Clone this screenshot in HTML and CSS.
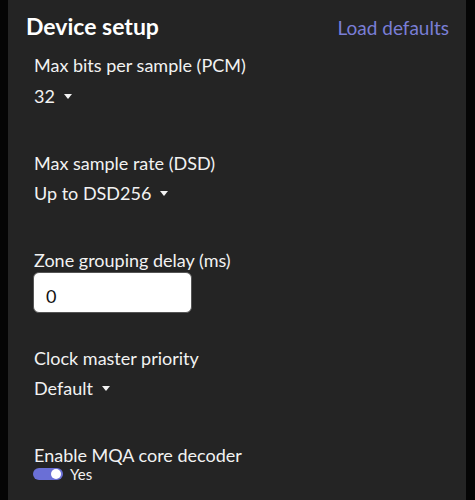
FILE: index.html
```html
<!DOCTYPE html>
<html>
<head>
<meta charset="utf-8">
<link rel="stylesheet" href="styles.css">
</head>
<body>
<div class="panel">
  <div class="header">
    <h1 class="title">Device setup</h1>
    <a class="link">Load defaults</a>
  </div>
  <div class="fields">
    <div class="field">
      <div class="label">Max bits per sample (PCM)</div>
      <div class="select"><span>32</span><span class="caret"></span></div>
    </div>
    <div class="field">
      <div class="label">Max sample rate (DSD)</div>
      <div class="select"><span>Up to DSD256</span><span class="caret"></span></div>
    </div>
    <div class="field">
      <div class="label">Zone grouping delay (ms)</div>
      <div class="input">0</div>
    </div>
    <div class="field">
      <div class="label">Clock master priority</div>
      <div class="select"><span>Default</span><span class="caret"></span></div>
    </div>
    <div class="field">
      <div class="label">Enable MQA core decoder</div>
      <div class="toggle-row"><span class="toggle"><span class="knob"></span></span><span class="toggle-text">Yes</span></div>
    </div>
  </div>
</div>
</body>
</html>
```
FILE: styles.css
```css
html, body {
  margin: 0;
  padding: 0;
  background: #050505;
  height: 100%;
}
body {
  font-family: Lato, "Noto Sans", sans-serif;
  color: #f2f2f2;
}
.panel {
  margin-left: 8px;
  width: 458px;
  height: 500px;
  background: #242424;
  box-sizing: border-box;
  padding: 11px 17px 0 18px;
  overflow: hidden;
}
.header {
  display: flex;
  justify-content: space-between;
  align-items: baseline;
  height: 30px;
  margin-bottom: 12px;
}
.title {
  margin: 0;
  font-size: 23px;
  line-height: 30px;
  font-weight: 700;
  color: #ffffff;
}
.link {
  font-size: 19px;
  line-height: 30px;
  color: #7a7ed6;
}
.fields {
  padding-left: 7px;
}
.field {
  margin-bottom: 32.5px;
}
.label {
  font-size: 18px;
  line-height: 24px;
  padding-left: 1px;
}
.select {
  height: 41px;
  box-sizing: border-box;
  padding-top: 6.5px;
  display: flex;
  align-items: flex-start;
  font-size: 18px;
  line-height: 24px;
  padding-left: 1px;
}
.caret {
  width: 0;
  height: 0;
  border-left: 4.5px solid transparent;
  border-right: 4.5px solid transparent;
  border-top: 5px solid #f2f2f2;
  margin-left: 9px;
  margin-top: 10px;
}
.input {
  width: 159px;
  height: 41px;
  box-sizing: border-box;
  background: #ffffff;
  border: 1px solid #555555;
  border-radius: 6px;
  color: #111111;
  font-size: 18px;
  padding: 11px 0 0 12px;
  line-height: 24px;
}
.toggle-row {
  display: flex;
  align-items: center;
  height: 14px;
}
.toggle {
  width: 30px;
  height: 12px;
  border-radius: 6px;
  background: #6a6fd6;
  position: relative;
}
.knob {
  position: absolute;
  right: 2px;
  top: 1px;
  width: 10px;
  height: 10px;
  border-radius: 50%;
  background: #ffffff;
}
.toggle-text {
  font-size: 15px;
  margin-left: 7px;
  line-height: 14px;
}
```
